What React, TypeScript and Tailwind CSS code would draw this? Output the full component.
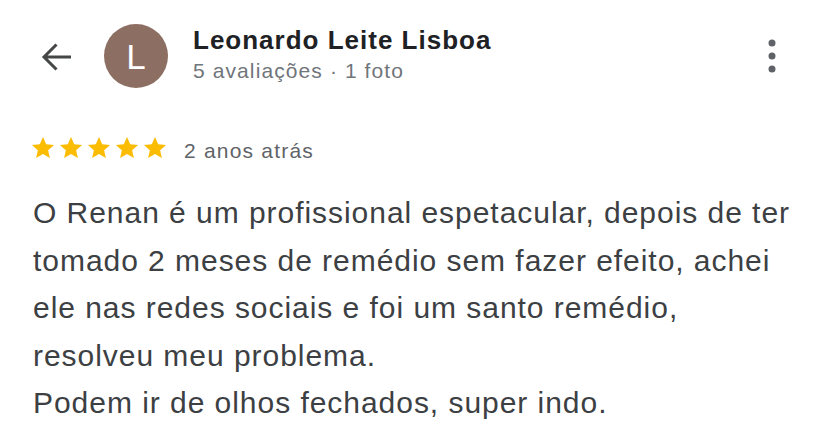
import React from 'react';

const Star = () => (
  <svg viewBox="1.8 2.2 20.4 19.3" className="w-[24px] h-[21px]" fill="#fbbc04">
    <path d="M12 2.2l2.94 6.7 7.26.66-5.5 4.8 1.63 7.14L12 17.77 5.67 21.5l1.63-7.14-5.5-4.8 7.26-.66z" />
  </svg>
);

const lines = [
  'O Renan é um profissional espetacular, depois de ter',
  'tomado 2 meses de remédio sem fazer efeito, achei',
  'ele nas redes sociais e foi um santo remédio,',
  'resolveu meu problema.',
  'Podem ir de olhos fechados, super indo.',
];

export default function App() {
  return (
    <div className="w-[828px] h-[444px] bg-white overflow-hidden font-['Liberation_Sans',Arial,sans-serif]">
      {/* header */}
      <div className="flex items-start pl-[40px] pr-[52px] pt-[24px]">
        <svg viewBox="0 0 32 32" className="mt-[17px] w-[32px] h-[32px]" fill="none" stroke="#444746" strokeWidth="3">
          <path d="M31 16H4M16.5 3.5L4 16l12.5 12.5" />
        </svg>
        <div className="ml-[32px] w-[64px] h-[64px] rounded-full bg-[#8d6e63] flex items-center justify-center text-white text-[35px] leading-none">
          L
        </div>
        <div className="ml-[25px] flex-1 mt-[1px]">
          <div className="text-[26px] font-bold tracking-[1px] text-[#202124] leading-[30px]">Leonardo Leite Lisboa</div>
          <div className="mt-[3px] text-[21px] tracking-[1.1px] text-[#70757a] leading-[26px]">5 avaliações · 1 foto</div>
        </div>
        <svg viewBox="0 0 8 34" className="mt-[15px] w-[8px] h-[34px]" fill="#5f6368">
          <circle cx="4" cy="4" r="3.5" />
          <circle cx="4" cy="17" r="3.5" />
          <circle cx="4" cy="30" r="3.5" />
        </svg>
      </div>

      {/* rating */}
      <div className="flex items-start pl-[31px] mt-[49px]">
        <div className="flex gap-[4px]">
          <Star />
          <Star />
          <Star />
          <Star />
          <Star />
        </div>
        <span className="ml-[17px] mt-[2px] text-[21px] leading-[24px] tracking-[1.2px] text-[#5f6368]">2 anos atrás</span>
      </div>

      {/* review text */}
      <div className="pl-[33px] mt-[26px] text-[30px] leading-[47.5px] tracking-[0.96px] text-[#3c4043]">
        {lines.map((l) => (
          <div key={l}>{l}</div>
        ))}
      </div>
    </div>
  );
}
